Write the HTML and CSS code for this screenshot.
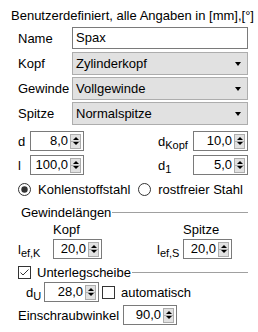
FILE: index.html
```html
<!DOCTYPE html>
<html>
<head>
<meta charset="utf-8">
<link rel="stylesheet" href="styles.css">
</head>
<body>
<div class="panel">
  <div class="title">Benutzerdefiniert, alle Angaben in [mm],[°]</div>

  <div class="form">
    <div class="frow"><span class="lbl">Name</span><div class="textbox">Spax</div></div>
    <div class="frow sel1"><span class="lbl">Kopf</span><div class="select"><span>Zylinderkopf</span><span class="caret"></span></div></div>
    <div class="frow sel"><span class="lbl">Gewinde</span><div class="select"><span>Vollgewinde</span><span class="caret"></span></div></div>
    <div class="frow sel"><span class="lbl">Spitze</span><div class="select"><span>Normalspitze</span><span class="caret"></span></div></div>
  </div>

  <div class="spins">
    <div class="srow">
      <div class="scol left"><span class="slbl">d</span><div class="spin w54"><span class="val">8,0</span><span class="btn"><i class="up"></i><i class="dn"></i></span></div></div>
      <div class="scol right"><span class="slbl">d<sub>Kopf</sub></span><div class="spin w55"><span class="val">10,0</span><span class="btn"><i class="up"></i><i class="dn"></i></span></div></div>
    </div>
    <div class="srow">
      <div class="scol left"><span class="slbl">l</span><div class="spin w54"><span class="val">100,0</span><span class="btn"><i class="up"></i><i class="dn"></i></span></div></div>
      <div class="scol right"><span class="slbl">d<sub>1</sub></span><div class="spin w55"><span class="val">5,0</span><span class="btn"><i class="up"></i><i class="dn"></i></span></div></div>
    </div>
  </div>

  <div class="radios">
    <span class="opt"><svg class="rb" width="13" height="13" viewBox="0 0 13 13"><circle cx="6.5" cy="6.5" r="6" fill="#fff" stroke="#333"/><circle cx="6.5" cy="6.5" r="3.2" fill="#333"/></svg>Kohlenstoffstahl</span>
    <span class="opt"><svg class="rb" width="13" height="13" viewBox="0 0 13 13"><circle cx="6.5" cy="6.5" r="6" fill="#fff" stroke="#333"/></svg>rostfreier Stahl</span>
  </div>

  <div class="group"><span class="gtitle">Gewindelängen</span><span class="gline"></span></div>

  <div class="lefhead"><span class="hk">Kopf</span><span class="hs">Spitze</span></div>
  <div class="lefrow">
    <span class="llbl">l<sub>ef,K</sub></span><div class="spin w49"><span class="val">20,0</span><span class="btn"><i class="up"></i><i class="dn"></i></span></div>
    <span class="llbl l2">l<sub>ef,S</sub></span><div class="spin w49"><span class="val">20,0</span><span class="btn"><i class="up"></i><i class="dn"></i></span></div>
  </div>

  <div class="group g2"><svg class="cb" width="13" height="13" viewBox="0 0 13 13"><rect x="0.5" y="0.5" width="12" height="12" fill="#fff" stroke="#333"/><path d="M2.5 6.5 L5 9 L10.5 3.5" fill="none" stroke="#333" stroke-width="1"/></svg><span class="gtitle">Unterlegscheibe</span><span class="gline"></span></div>

  <div class="durow">
    <span class="dlbl">d<sub>U</sub></span><div class="spin w55"><span class="val">28,0</span><span class="btn"><i class="up"></i><i class="dn"></i></span></div>
    <svg class="cb2" width="13" height="13" viewBox="0 0 13 13"><rect x="0.5" y="0.5" width="12" height="12" fill="#fff" stroke="#333"/></svg><span>automatisch</span>
  </div>

  <div class="winrow">
    <span>Einschraubwinkel</span><div class="spin w54"><span class="val">90,0</span><span class="btn"><i class="up"></i><i class="dn"></i></span></div>
  </div>
</div>
</body>
</html>
```

FILE: styles.css
```css
* { box-sizing: border-box; }
body {
  margin: 0;
  font-family: "Liberation Sans", Arial, sans-serif;
  font-size: 13px;
  color: #000;
  background: #fff;
}
.panel {
  width: 258px;
  height: 332px;
  padding-top: 8px;
  overflow: hidden;
}
.title {
  margin-left: 11px;
  line-height: 16px;
  white-space: nowrap;
}
.form {
  margin-top: 3px;
  display: flex;
  flex-direction: column;
}
.frow {
  display: flex;
  align-items: center;
  margin-left: 18px;
}
.frow .lbl { width: 54px; }
.frow.sel1 { margin-top: 3px; }
.frow.sel { margin-top: 2px; }
.textbox {
  width: 176px;
  height: 22px;
  border: 1px solid #7a7a7a;
  padding-left: 3px;
  line-height: 20px;
  background: #fff;
}
.select {
  width: 176px;
  height: 23px;
  border: 1px solid #adadad;
  background: #e1e1e1;
  padding: 0 6px 0 3px;
  display: flex;
  align-items: center;
  justify-content: space-between;
}
.caret {
  width: 0;
  height: 0;
  border-left: 3.5px solid transparent;
  border-right: 3.5px solid transparent;
  border-top: 4px solid #000;
}
.spins {
  margin-top: 6px;
  display: flex;
  flex-direction: column;
  gap: 4px;
}
.srow { display: flex; }
.scol { display: flex; align-items: center; }
.scol.left { margin-left: 18px; width: 140px; }
.scol.left .slbl { width: 12px; }
.scol.right .slbl { width: 35px; }
sub {
  font-size: 11px;
  vertical-align: -3px;
  line-height: 0;
}
.spin {
  height: 20px;
  border: 1px solid #7a7a7a;
  display: flex;
  align-items: center;
  padding-right: 2px;
  background: #fff;
}
.w54 { width: 54px; }
.w55 { width: 55px; }
.w49 { width: 49px; }
.spin .val {
  flex: 1;
  text-align: right;
  padding-right: 2px;
  line-height: 16px;
}
.spin .btn {
  width: 11px;
  height: 15px;
  border: 1px solid #adadad;
  background: #e1e1e1;
  display: flex;
  flex-direction: column;
  align-items: center;
  justify-content: space-evenly;
  position: relative;
}
.spin .btn::after {
  content: "";
  position: absolute;
  left: 0;
  right: 0;
  top: 6px;
  height: 1px;
  background: #adadad;
}
.spin .btn i {
  display: block;
  width: 0;
  height: 0;
  border-left: 3px solid transparent;
  border-right: 3px solid transparent;
}
.spin .btn i.up { border-bottom: 3px solid #000; }
.spin .btn i.dn { border-top: 3px solid #000; }
.radios {
  margin-top: 6px;
  margin-left: 18px;
  height: 16px;
  display: flex;
  align-items: center;
  white-space: nowrap;
}
.opt { display: flex; align-items: center; }
.opt + .opt { margin-left: 8px; }
.rb { margin-right: 7px; flex: none; }
.group {
  margin-top: 7px;
  height: 16px;
  display: flex;
  align-items: center;
  margin-left: 21px;
  margin-right: 10px;
}
.gline {
  flex: 1;
  height: 1px;
  background: #a0a0a0;
  margin-left: 1px;
}
.lefhead {
  margin-top: 2px;
  height: 16px;
  line-height: 16px;
  display: flex;
}
.hk { margin-left: 53px; width: 130px; }
.lefrow {
  margin-top: 1px;
  display: flex;
  align-items: center;
}
.llbl { margin-left: 18px; width: 35px; }
.llbl.l2 { margin-left: 55px; width: 26px; }
.group.g2 {
  margin-top: 5px;
  margin-left: 18px;
}
.cb { margin-right: 6px; flex: none; }
.durow {
  margin-top: 2px;
  margin-left: 26px;
  display: flex;
  align-items: center;
}
.dlbl { width: 18px; }
.cb2 { margin-left: 3px; margin-right: 6px; flex: none; }
.winrow {
  margin-top: 3px;
  margin-left: 18px;
  display: flex;
  align-items: center;
}
.winrow span:first-child { width: 105px; }
```
